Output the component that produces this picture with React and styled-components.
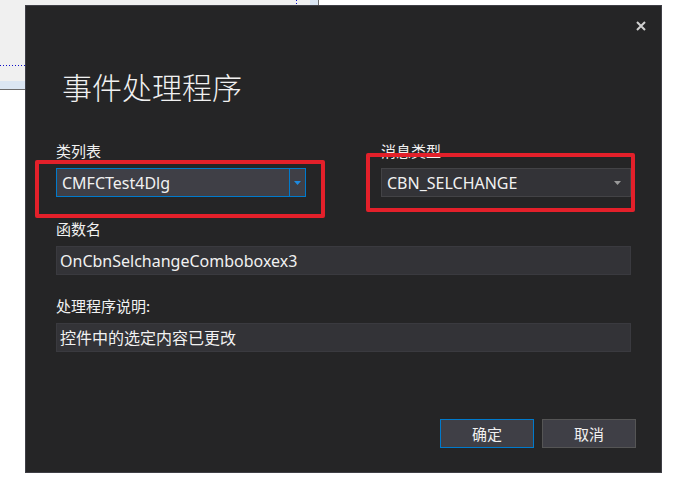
import styled, { createGlobalStyle } from "styled-components";

const GlobalStyle = createGlobalStyle`
  html, body {
    margin: 0;
    padding: 0;
    background: #ffffff;
  }

  body {
    width: 683px;
    height: 488px;
    overflow: hidden;
    font-family: "Noto Sans", "Noto Sans CJK SC", sans-serif;
  }
`;

const Page = styled.div`
  position: relative;
  width: 683px;
  height: 488px;
`;

const BackWindow = styled.div`
  width: 318px;
  height: 89px;
  border-right: 1px solid #6d6d6d;
  border-bottom: 1px solid #6d6d6d;
  background:
    repeating-linear-gradient(to right, #1010c8 0 1px, transparent 1px 3px) 0 65px / 100% 1px no-repeat,
    repeating-linear-gradient(to bottom, #1010c8 0 1px, transparent 1px 3px) 296px 0 / 1px 100% no-repeat,
    linear-gradient(#dbe6f3, #dbe6f3) left bottom / 100% 8px no-repeat,
    linear-gradient(#dbe6f3, #dbe6f3) right top / 8px 100% no-repeat,
    #f0f0f0;
`;

const Dialog = styled.div`
  position: absolute;
  left: 25px;
  top: 5px;
  box-sizing: border-box;
  width: 637px;
  height: 468px;
  display: flex;
  flex-direction: column;
  background: #252526;
  border: 1px solid #3f3f46;
  color: #f1f1f1;
`;

const TopBar = styled.div`
  display: flex;
  justify-content: flex-end;
  padding: 15px 15px 0 0;
`;

const CloseButton = styled.div`
  width: 10px;
  height: 10px;
  display: flex;
`;

const Title = styled.h1`
  margin: 40px 0 0 36px;
  font-family: "Noto Sans CJK SC", sans-serif;
  font-size: 30px;
  line-height: 30px;
  font-weight: 300;
  color: #f1f1f1;
`;

const Body = styled.div`
  display: flex;
  flex-direction: column;
  width: 575px;
  margin: 41px 0 0 30px;
`;

const TopGrid = styled.div`
  display: grid;
  grid-template-columns: 250px 250px;
  column-gap: 75px;
`;

const Field = styled.div`
  position: relative;
  display: flex;
  flex-direction: column;
  margin-top: ${({ $gap }) => $gap || 0}px;
`;

const Label = styled.div`
  font-family: "Noto Sans CJK SC", sans-serif;
  font-size: 15px;
  line-height: 18px;
  margin-bottom: 8px;
  color: #f1f1f1;
`;

const Combo = styled.div`
  position: relative;
  box-sizing: border-box;
  height: 29px;
  display: flex;
  align-items: center;
  background: ${({ $focused }) => ($focused ? "#3f3f46" : "#333337")};
  border: 1px solid ${({ $focused }) => ($focused ? "#007acc" : "#434346")};
`;

const ComboText = styled.div`
  flex: 1;
  padding-left: 5px;
  font-size: 16px;
  line-height: 20px;
  color: #f1f1f1;
  white-space: nowrap;
`;

const DropButton = styled.div`
  box-sizing: border-box;
  width: 16px;
  height: 100%;
  display: flex;
  align-items: center;
  justify-content: center;
  border-left: 1px solid ${({ $focused }) => ($focused ? "#007acc" : "transparent")};
  margin-right: ${({ $focused }) => ($focused ? 0 : 5)}px;
`;

const RedMark = styled.div`
  position: absolute;
  left: ${({ $l }) => $l}px;
  top: ${({ $t }) => $t}px;
  right: ${({ $r }) => $r}px;
  bottom: ${({ $b }) => $b}px;
  border: 4px solid #e3202a;
  border-radius: 2px;
  pointer-events: none;
`;

const TextBox = styled.div`
  box-sizing: border-box;
  height: 29px;
  display: flex;
  align-items: center;
  padding-left: 3px;
  background: #333337;
  border: 1px solid #3a3a3f;
  font-size: 16px;
  line-height: 20px;
  color: #f1f1f1;
  white-space: nowrap;
`;

const Footer = styled.div`
  margin-top: auto;
  display: flex;
  justify-content: flex-end;
  gap: 8px;
  padding: 0 25px 24px 0;
`;

const Button = styled.div`
  box-sizing: border-box;
  width: 94px;
  height: 29px;
  display: flex;
  align-items: center;
  justify-content: center;
  background: #3f3f46;
  border: 1px solid ${({ $primary }) => ($primary ? "#007acc" : "#555555")};
  font-family: "Noto Sans CJK SC", sans-serif;
  font-size: 15px;
  color: #f1f1f1;
`;

function Arrow({ color }) {
  return (
    <svg width="7" height="4" viewBox="0 0 7 4">
      <path d="M0 0 H7 L3.5 4 Z" fill={color} />
    </svg>
  );
}

function ComboBox({ value, focused }) {
  return (
    <Combo $focused={focused}>
      <ComboText>{value}</ComboText>
      <DropButton $focused={focused}>
        <Arrow color={focused ? "#1e8ae0" : "#9a9a9a"} />
      </DropButton>
    </Combo>
  );
}

export default function App() {
  return (
    <Page>
      <GlobalStyle />
      <BackWindow />
      <Dialog>
        <TopBar>
          <CloseButton>
            <svg width="10" height="10" viewBox="0 0 10 10">
              <path d="M1 1 L9 9 M9 1 L1 9" stroke="#d0d0d0" strokeWidth="2" />
            </svg>
          </CloseButton>
        </TopBar>
        <Title>事件处理程序</Title>
        <Body>
          <TopGrid>
            <Field>
              <Label>类列表</Label>
              <ComboBox value="CMFCTest4Dlg" focused />
              <RedMark $l={-21} $t={18} $r={-19} $b={-21} />
            </Field>
            <Field>
              <Label>消息类型</Label>
              <ComboBox value="CBN_SELCHANGE" />
              <RedMark $l={-15} $t={11} $r={-4} $b={-15} />
            </Field>
          </TopGrid>
          <Field $gap={23}>
            <Label>函数名</Label>
            <TextBox>OnCbnSelchangeComboboxex3</TextBox>
          </Field>
          <Field $gap={22}>
            <Label>处理程序说明:</Label>
            <TextBox>控件中的选定内容已更改</TextBox>
          </Field>
        </Body>
        <Footer>
          <Button $primary>确定</Button>
          <Button>取消</Button>
        </Footer>
      </Dialog>
    </Page>
  );
}
